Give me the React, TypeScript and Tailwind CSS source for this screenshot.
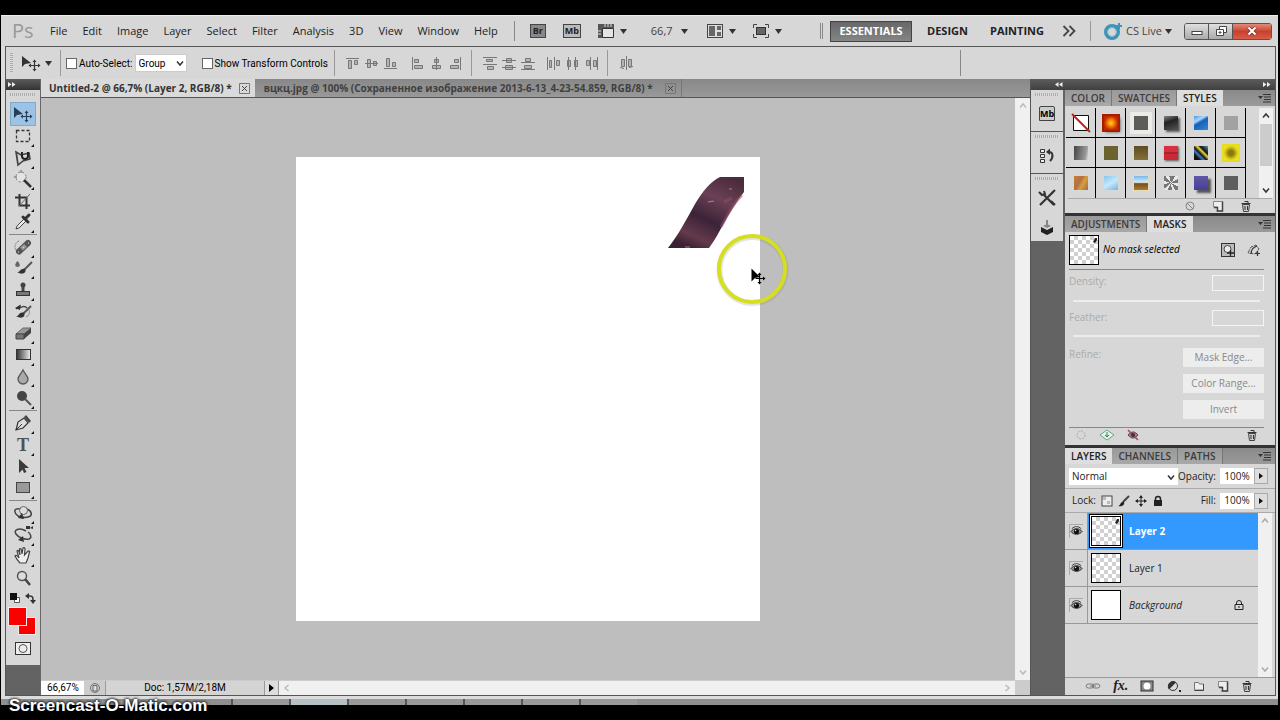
import type { ReactNode } from "react";

const menus = ["File", "Edit", "Image", "Layer", "Select", "Filter", "Analysis", "3D", "View", "Window", "Help"];

const layers = [
    { name: "Layer 2", kind: "active" },
    { name: "Layer 1", kind: "normal" },
    { name: "Background", kind: "locked" },
];

const styleSwatches = [
    "none",
    "bg-[radial-gradient(circle,#ffc020_10%,#f07000_40%,#c02800_70%)] outline-2 outline-[#a81c00] shadow-[2px_2px_3px_#444]",
    "bg-[#5c5c58] outline-4 outline-[#ecece6]",
    "bg-[linear-gradient(160deg,#888,#222_40%,#555)] shadow-[2px_2px_2px_#555]",
    "bg-[linear-gradient(150deg,#5098d8,#a8d8ff_30%,#1860b8_45%,#3088d8)]",
    "bg-[#a2a2a2]",
    "bg-[linear-gradient(100deg,#444,#999_80%,#ddd)]",
    "bg-[#6b6230]",
    "bg-[linear-gradient(#5c4c20,#86703a)]",
    "bg-[linear-gradient(#d83040_40%,#8a2028_50%,#cc2838_60%)] shadow-[1px_1px_2px_#555]",
    "bg-[linear-gradient(45deg,#111_20%,#4080c0_35%,#111_45%,#e8d840_60%,#111_70%,#50a0a0)]",
    "bg-[radial-gradient(circle,#887a10_25%,#b8a810_45%,#f0e020_75%)] outline-2 outline-[#e8dc20]",
    "bg-[linear-gradient(120deg,#c88030,#b07048_40%,#d8a030_60%,#a06860)]",
    "bg-[linear-gradient(150deg,#88c4ec,#c4e8fc_50%,#78b4e0)]",
    "bg-[linear-gradient(#78b8e8,#d8ecf8_45%,#785018_55%,#a87c30)] outline-1 outline-[#e4ddb8]",
    "bg-[repeating-conic-gradient(#777_0_9%,#e8e8e8_0_16%)]",
    "bg-[linear-gradient(#6058a0,#48409a)] shadow-[3px_3px_2px_#555]",
    "bg-[#5e5e5e]",
];

function Svg({ w = 16, h = 16, children, className = "" }: { w?: number; h?: number; children: ReactNode; className?: string }) {
    return (
        <svg width={w} height={h} viewBox={`0 0 ${w} ${h}`} className={`shrink-0 ${className}`} fill="none" aria-hidden="true">
            {children}
        </svg>
    );
}

function Down({ className = "" }: { className?: string }) {
    return (
        <Svg w={7} h={5} className={className}>
            <path d="M0 0h7L3.500 5z" fill="#333" />
        </Svg>
    );
}

function Chevron({ color = "#333", dir = "down" }: { color?: string; dir?: "down" | "up" | "left" | "right" }) {
    const d = { down: "M1 2.500L4 6l3-3.500", up: "M1 5.500L4 2l3 3.500", left: "M5.500 1L2 4l3.500 3", right: "M2.500 1L6 4 2.500 7" };
    return (
        <Svg w={8} h={8}>
            <path d={d[dir]} stroke={color} strokeWidth="1.500" />
        </Svg>
    );
}

function MoveIcon({ fill = "#333" }: { fill?: string }) {
    return (
        <>
            <path d="M3 3v11l3-3 6-1z" fill={fill} />
            <path d="M15.500 8v9M11 12.500h9" stroke={fill} strokeWidth="1.200" />
            <path d="M15.500 6.500l2 2.500h-4zM15.500 18.500l2-2.500h-4zM9.500 12.500l2.500-2v4zM21.500 12.500l-2.500-2v4z" fill={fill} />
        </>
    );
}

function Trash() {
    return (
        <Svg w={12} h={12}>
            <path d="M2.500 4.500h7l-1 7h-5z" fill="#ccc" stroke="#444" />
            <path d="M1.500 3.500h9M4.500 1.500h3.500v2M5 6v4M7.500 6v4" stroke="#333" />
        </Svg>
    );
}

function NewPage() {
    return (
        <Svg w={12} h={12}>
            <path d="M1.500 1.500h9v9.500h-5v-4h-4z" fill="#eee" stroke="#888" />
            <path d="M10.500 1.500v9.500h-6M2 7.500h3.500v3.500" stroke="#444" strokeWidth="1.500" />
        </Svg>
    );
}

const tools: { name: string; icon: ReactNode }[][] = [
    [
        { name: "Move", icon: <MoveIcon fill="#2b3d55" /> },
        { name: "Marquee", icon: <rect x="5.500" y="4.500" width="13" height="11" stroke="#333" strokeWidth="1.300" strokeDasharray="3 2" /> },
        {
            name: "Lasso",
            icon: (
                <>
                    <path d="M5 4l5 3 8-2 1 6-7 2-5 4zM7 17l-1-8-1-5" stroke="#444" strokeWidth="1.600" />
                    <path d="M11 4v4a3 3 0 006 0V4" stroke="#222" strokeWidth="2" />
                </>
            ),
        },
        {
            name: "Quick Selection",
            icon: (
                <>
                    <circle cx="10" cy="8" r="5" fill="#e4e4e4" stroke="#777" strokeDasharray="2 2" />
                    <path d="M13 11l7 7" stroke="#333" strokeWidth="2.500" />
                    <path d="M3 8h3M10 1v3" stroke="#666" />
                </>
            ),
        },
        {
            name: "Crop",
            icon: (
                <>
                    <path d="M8.500 3v11.500H19M4 6.500h11.500V18" stroke="#333" strokeWidth="2" />
                    <path d="M8 15L19 3" stroke="#666" />
                </>
            ),
        },
        {
            name: "Eyedropper",
            icon: (
                <>
                    <path d="M5 17l1-3 7-7 2 2-7 7z" fill="#eee" stroke="#444" />
                    <path d="M12 5l5 5M14 7l4-4" stroke="#333" strokeWidth="3" strokeLinecap="round" />
                </>
            ),
        },
    ],
    [
        {
            name: "Healing Brush",
            icon: (
                <>
                    <path d="M8 4a6 6 0 00-3 9" stroke="#777" strokeDasharray="2 1" />
                    <path d="M8 14.500L17 6" stroke="#555" strokeWidth="6" strokeLinecap="round" />
                    <path d="M10.500 12L14.500 8.500" stroke="#999" strokeWidth="4" />
                    <path d="M12 10.500h1M7 15h1M17 6h1" stroke="#ddd" />
                </>
            ),
        },
        {
            name: "Brush",
            icon: (
                <>
                    <path d="M6.500 3c3 3 3 6 0 6s-3-3 0-6z" fill="#666" />
                    <path d="M13 12l8-8" stroke="#555" strokeWidth="2" />
                    <path d="M6 14c3 1 3-4 8-3 2 3-2 7-8 3z" fill="#333" />
                </>
            ),
        },
        {
            name: "Clone Stamp",
            icon: (
                <>
                    <circle cx="12" cy="5" r="2.500" fill="#444" />
                    <path d="M12 5v7" stroke="#444" strokeWidth="3" />
                    <rect x="5.500" y="11.500" width="13" height="4" fill="#777" stroke="#333" />
                </>
            ),
        },
        {
            name: "History Brush",
            icon: (
                <>
                    <path d="M5 7l4-3v2c3-2 5-2 7 0" stroke="#444" strokeWidth="1.500" />
                    <path d="M12 12l8-8" stroke="#555" strokeWidth="2" />
                    <path d="M5 14c3 1 3-5 8-3 2 3-2 7-8 3zM4 6l5-3v5z" fill="#333" />
                    <path d="M18 8c1 3 0 6-3 7" stroke="#888" />
                </>
            ),
        },
        {
            name: "Eraser",
            icon: (
                <>
                    <path d="M5 11l7-6h8l-7 6z" fill="#999" stroke="#666" />
                    <path d="M13 16l7-6V5l-7 6z" fill="#444" />
                    <path d="M5 11h8v5H5z" fill="#777" stroke="#444" />
                </>
            ),
        },
        {
            name: "Gradient",
            icon: (
                <>
                    <defs>
                        <linearGradient id="tool-gradient">
                            <stop stopColor="#333" />
                            <stop offset="1" stopColor="#eee" />
                        </linearGradient>
                    </defs>
                    <rect x="5.500" y="4.500" width="14" height="10" fill="url(#tool-gradient)" stroke="#333" />
                </>
            ),
        },
        { name: "Blur", icon: <path d="M12 3c2 4 5 6 5 9a5 5 0 01-10 0c0-3 3-5 5-9z" fill="#aaa" stroke="#555" strokeWidth="1.300" /> },
        {
            name: "Dodge",
            icon: (
                <>
                    <circle cx="11" cy="8" r="5" fill="#444" />
                    <path d="M14 11l6 6" stroke="#555" strokeWidth="2" />
                </>
            ),
        },
    ],
    [
        {
            name: "Pen",
            icon: (
                <>
                    <path d="M5 17l2-8 6-4 4 5-5 5z" fill="#ddd" stroke="#333" strokeWidth="1.200" />
                    <path d="M5 17l6-6" stroke="#333" />
                    <path d="M13 4l2-2 5 6-2 2z" fill="#444" />
                </>
            ),
        },
        { name: "Type", icon: <text x="12" y="16" textAnchor="middle" fontSize="18" fontFamily="Liberation Serif, serif" fontWeight="bold" fill="#505050">T</text> },
        { name: "Path Selection", icon: <path d="M8 3v14l3.500-3.500L13 17l2.500-1-2-4H18z" fill="#3a3a3a" /> },
        { name: "Rectangle", icon: <rect x="5.500" y="4.500" width="13" height="10" fill="#999" stroke="#444" /> },
    ],
    [
        {
            name: "3D Rotate",
            icon: (
                <>
                    <path d="M9 6C3 5 2 9 7 13l5 2M16 6c5 2 6 7 1 8-3 1-6 0-8-1" stroke="#444" strokeWidth="1.500" />
                    <circle cx="12.500" cy="7.500" r="4" fill="#ddd" stroke="#666" />
                    <path d="M7 15l4-5 2 6z" fill="#333" />
                </>
            ),
        },
        {
            name: "3D Camera",
            icon: (
                <>
                    <path d="M15 6C8 2 2 5 5 9c2 3 8 6 13 5 3-1 2-5-1-7" stroke="#444" strokeWidth="1.500" />
                    <path d="M7 15l5-4 1 6zM15 1h4v3h-4zM19 3l3-2v3z" fill="#333" />
                </>
            ),
        },
        {
            name: "Hand",
            icon: (
                <path
                    d="M9 17c-2-2-4-5-5-7 1-1 2-1 4 2L6 5c1-1 2-1 3 4l-.500-6c1-1 2-1 2.500 5l1-6c1-1 2 0 2 1l-.500 6L17 5c1 0 2 0 1.500 1L17 12l-2 5z"
                    fill="#eee"
                    stroke="#444"
                    strokeWidth="1.200"
                />
            ),
        },
        {
            name: "Zoom",
            icon: (
                <>
                    <circle cx="11" cy="8" r="4.500" fill="#ddd" stroke="#555" strokeWidth="1.500" />
                    <path d="M14 11l5 6" stroke="#444" strokeWidth="2.500" />
                </>
            ),
        },
    ],
];

const alignEdges: ReactNode[][] = [
    [
        <path d="M2 3.500h13M4.500 5.500h3v8h-3zM10.500 5.500h3v4h-3z" />,
        <path d="M2 8.500h13M4.500 4.500h3v8h-3zM10.500 6.500h3v4h-3z" />,
        <path d="M2 13.500h13M4.500 3.500h3v8h-3zM10.500 7.500h3v4h-3z" />,
    ],
    [
        <path d="M3.500 2v13M5.500 4.500h4v3h-4zM5.500 10.500h8v3h-8z" />,
        <path d="M8.500 2v13M6.500 4.500h4v3h-4zM4.500 10.500h8v3h-8z" />,
        <path d="M13.500 2v13M7.500 4.500h4v3h-4zM3.500 10.500h8v3h-8z" />,
    ],
    [
        <path d="M1 2.500h14M1 9.500h14M4.500 4.500h6v2h-6zM5.500 11.500h6v3h-6z" />,
        <path d="M1 5.500h14M1 12.500h14M5.500 3.500h5v4h-5zM4.500 10.500h7v4h-7z" />,
        <path d="M1 7.500h14M1 14.500h14M5.500 3.500h5v3h-5zM4.500 10.500h7v3h-7z" />,
    ],
    [
        <path d="M2.500 2v13M9.500 2v13M4.500 5.500h2v7h-2zM11.500 5.500h3v5h-3z" />,
        <path d="M4.500 2v13M11.500 2v13M3.500 5.500h3v6h-3zM10.500 5.500h3v6h-3z" />,
        <path d="M7.500 2v13M14.500 2v13M3.500 5.500h3v5h-3zM10.500 5.500h3v6h-3z" />,
    ],
    [<path d="M8.500 1v14M3.500 4.500h3v7h-3zM10.500 4.500h3v7h-3zM2 12.500l4 1M11 12.500l4-1" />],
];

function AlignGroup({ icons }: { icons: ReactNode[] }) {
    return (
        <div className="flex gap-[3px]">
            {icons.map((icon, i) => (
                <button key={i} aria-label="Align">
                    <Svg>
                        <g stroke="#777" fill="#b4b4b4">{icon}</g>
                    </Svg>
                </button>
            ))}
        </div>
    );
}

function PanelTabs({ tabs, active }: { tabs: string[]; active: string }) {
    return (
        <div className="flex h-4 shrink-0 bg-linear-to-b from-[#8a8a8a] to-[#9a9a9a] text-[10px] leading-4 font-semibold">
            {tabs.map((tab) => (
                <button
                    key={tab}
                    className={
                        tab === active
                            ? "bg-[#dedede] px-[6px] text-[#222]"
                            : "border-r border-[#777] bg-linear-to-b from-[#999] to-[#a8a8a8] px-[6px] text-[#3c3c3c]"
                    }
                >
                    {tab}
                </button>
            ))}
            <button className="mr-1 ml-auto" aria-label="Panel menu">
                <Svg w={13} h={10}>
                    <path d="M0 3h5L2.500 6zM5 1h8v1H5zM6 3.500h7v1H6zM6 6h7v1H6zM5 8.500h8v1H5z" fill="#333" />
                </Svg>
            </button>
        </div>
    );
}

function Thumb({ mark = false, plain = false }: { mark?: boolean; plain?: boolean }) {
    return (
        <div
            className={
                plain
                    ? "h-[30px] w-[30px] shrink-0 border border-black bg-white"
                    : "h-[30px] w-[30px] shrink-0 border border-black bg-[conic-gradient(#d0d0d0_25%,#fff_0_50%,#d0d0d0_0_75%,#fff_0)] bg-[length:8px_8px]"
            }
        >
            {mark && (
                <Svg w={28} h={28}>
                    <path d="M23 6l2-4h2v2l-2 3z" fill="#222" />
                </Svg>
            )}
        </div>
    );
}

function Eye() {
    return (
        <Svg w={14} h={14} className="border-t border-l border-[#aaa]">
            <path d="M1 7c3-4 9-4 12 0-3 4-9 4-12 0z" fill="#999" stroke="#222" />
            <circle cx="7" cy="7" r="2.800" fill="#111" />
            <path d="M2 4c3-3 7-3 10 0" stroke="#333" />
            <circle cx="6" cy="6" r="0.800" fill="#ddd" />
        </Svg>
    );
}

function MenuBar() {
    return (
        <header className="flex h-[31px] shrink-0 items-center border-t border-[#eee] bg-[#d7d7d7] pr-[6px] pl-[11px] text-[#222]">
            <span className="w-[38px] text-[20px] leading-5 text-[#999]">Ps</span>
            <nav className="flex gap-[15px] text-[11px]">
                {menus.map((m) => (
                    <button key={m}>{m}</button>
                ))}
            </nav>
            <div className="ml-4 h-5 w-px bg-[#888]" />
            <button className="ml-[15px] h-[14px] w-4 border border-[#444] bg-[#888] text-[9px] leading-3 font-bold">Br</button>
            <button className="ml-[17px] h-[14px] w-[18px] border border-[#444] bg-[#bbb] text-[9px] leading-3 font-bold">Mb</button>
            <button className="ml-4 flex items-center gap-[5px]" aria-label="View extras">
                <Svg w={18}>
                    <path d="M1 1h16v4H6v10H1z" fill="#555" />
                    <path d="M5.500 5.500h11v9h-11z" fill="#e4e4e4" stroke="#333" />
                    <path d="M8 1v3M11 1v3M14 1v3M1 8h3M1 11h3" stroke="#ddd" />
                </Svg>
                <Down />
            </button>
            <button className="ml-6 flex items-center gap-2 text-[11px] text-[#444]">
                66,7
                <Down />
            </button>
            <button className="ml-[18px] flex items-center gap-[5px]" aria-label="Arrange documents">
                <Svg w={18}>
                    <rect x="1.500" y="1.500" width="15" height="13" fill="#ddd" stroke="#444" />
                    <path d="M3 3h6v10H3zM11 3h4v4h-4zM11 9h4v4h-4z" fill="#666" />
                </Svg>
                <Down />
            </button>
            <button className="ml-4 flex items-center gap-[5px]" aria-label="Screen mode">
                <Svg w={18}>
                    <path d="M1.500 5V1.500H5M13 1.500h3.500V5M1.500 11v3.500H5M13 14.500h3.500V11" stroke="#444" />
                    <rect x="4.500" y="4.500" width="9" height="7" fill="#666" stroke="#333" />
                </Svg>
                <Down />
            </button>
            <div className="ml-auto h-4 w-[3px] border-x border-[#888]" />
            <button className="ml-[7px] h-[21px] w-[82px] border border-[#444] bg-linear-to-b from-[#686868] to-[#858585] text-[11px] font-bold text-white">
                ESSENTIALS
            </button>
            <button className="ml-[15px] text-[11px] font-bold">DESIGN</button>
            <button className="ml-[22px] text-[11px] font-bold">PAINTING</button>
            <button className="ml-[18px]" aria-label="More workspaces">
                <Svg w={14} h={12}>
                    <path d="M1.500 1l5 5-5 5M7.500 1l5 5-5 5" stroke="#444" strokeWidth="1.800" />
                </Svg>
            </button>
            <div className="ml-[14px] h-5 w-px bg-[#999]" />
            <button className="ml-3 flex items-center gap-[3px] text-[11px] text-[#444]">
                <Svg w={20} h={18}>
                    <circle cx="9" cy="10" r="6" stroke="#3f93b4" strokeWidth="4" />
                    <circle cx="9" cy="10" r="4.500" stroke="#86c2d8" />
                    <path d="M16 1v6M13 4h6" stroke="#3f93b4" strokeWidth="2" />
                </Svg>
                CS Live
                <Down />
            </button>
            <div className="ml-3 flex h-[17px] overflow-hidden rounded-[3px] border border-[#555]">
                <button className="flex w-6 items-center justify-center border-r border-[#555] bg-linear-to-b from-[#e0e0e0] to-[#aaa]" aria-label="Minimize">
                    <Svg w={12} h={12}>
                        <rect x="1" y="6.500" width="10" height="3" fill="#fff" stroke="#444" />
                    </Svg>
                </button>
                <button className="flex w-6 items-center justify-center border-r border-[#555] bg-linear-to-b from-[#e0e0e0] to-[#aaa]" aria-label="Restore">
                    <Svg w={12} h={12}>
                        <path d="M4.500 1.500h7v6h-7z" fill="#fff" stroke="#444" />
                        <path d="M1.500 4.500h7v6h-7z" fill="#fff" stroke="#444" />
                        <path d="M4 7h2v1H4z" stroke="#444" />
                    </Svg>
                </button>
                <button className="flex w-[38px] items-center justify-center bg-linear-to-b from-[#e08a78] via-[#c8402c] to-[#d85c48]" aria-label="Close">
                    <Svg w={10} h={10}>
                        <path d="M1.500 1.500l7 7M8.500 1.500l-7 7" stroke="#722" strokeWidth="3.500" />
                        <path d="M1.500 1.500l7 7M8.500 1.500l-7 7" stroke="#fff" strokeWidth="2.200" />
                    </Svg>
                </button>
            </div>
        </header>
    );
}

function OptionsBar() {
    return (
        <div className="flex h-8 shrink-0 items-center bg-[#d7d7d7] pl-1 font-[Roboto,sans-serif] text-[10px] text-black">
            <div className="h-5 w-[3px] bg-[repeating-linear-gradient(#aaa_0_1px,#ddd_1px_2px)]" />
            <button className="ml-[6px] flex items-center gap-1" aria-label="Move tool presets">
                <Svg w={22} h={20}>
                    <MoveIcon />
                </Svg>
                <Down />
            </button>
            <div className="ml-2 h-[26px] w-px bg-[#999]" />
            <input id="auto-select" type="checkbox" className="ml-[5px] h-[11px] w-[11px] appearance-none border border-[#666] bg-white" />
            <label htmlFor="auto-select" className="ml-[2px]">Auto-Select:</label>
            <div className="relative ml-[2px] flex">
                <select aria-label="Auto-select target" className="h-[18px] w-[52px] appearance-none border border-[#ccc] bg-white pl-[3px] text-[10px]">
                    <option>Group</option>
                </select>
                <span className="pointer-events-none absolute top-[5px] right-[3px]">
                    <Chevron />
                </span>
            </div>
            <input id="transform" type="checkbox" className="ml-[15px] h-[11px] w-[11px] appearance-none border border-[#666] bg-white" />
            <label htmlFor="transform" className="ml-[2px]">Show Transform Controls</label>
            <div className="mr-[9px] ml-[6px] h-[26px] w-px bg-[#999]" />
            <AlignGroup icons={alignEdges[0]} />
            <div className="w-[11px]" />
            <AlignGroup icons={alignEdges[1]} />
            <div className="mr-[10px] ml-2 h-[26px] w-px bg-[#999]" />
            <AlignGroup icons={alignEdges[2]} />
            <div className="w-[9px]" />
            <AlignGroup icons={alignEdges[3]} />
            <div className="mr-[10px] ml-2 h-[26px] w-px bg-[#999]" />
            <AlignGroup icons={alignEdges[4]} />
            <div className="mr-[314px] ml-auto h-[26px] w-px bg-[#888]" />
        </div>
    );
}

function Toolbox() {
    return (
        <aside className="flex w-[35px] shrink-0 flex-col border-r border-[#666] bg-[#636363]">
            <div className="flex h-[11px] items-center bg-linear-to-b from-[#5c5c5c] to-[#333] pl-[2px]">
                <Svg w={8} h={5}>
                    <path d="M0 0l3.500 2.500L0 5zM4 0l3.500 2.500L4 5z" fill="#eee" />
                </Svg>
            </div>
            <div className="flex flex-col bg-[#d7d7d7] pb-2">
                <div className="mx-1 mt-[3px] mb-[6px] h-[3px] bg-[repeating-linear-gradient(90deg,#aaa_0_1px,#ddd_1px_2px)]" />
                {tools.map((group, g) => (
                    <div key={g}>
                        {g > 0 && <div className="mx-[3px] my-px h-px bg-[#888]" />}
                        <div className={g === 0 ? "flex h-[131px] flex-col" : g === 1 ? "flex h-[173px] flex-col" : "flex h-[87px] flex-col"}>
                            {group.map((tool) => (
                                <button
                                    key={tool.name}
                                    aria-label={tool.name}
                                    className={
                                        tool.name === "Move"
                                            ? "relative mx-1 flex flex-1 items-center justify-center border border-[#80a8c8] bg-[#9cc3e6]"
                                            : "relative mx-1 flex flex-1 items-center justify-center"
                                    }
                                >
                                    <Svg w={24} h={20}>{tool.icon}</Svg>
                                    {tool.name !== "Move" && tool.name !== "Zoom" && (
                                        <span className="absolute right-[2px] bottom-0">
                                            <Svg w={3} h={3}>
                                                <path d="M3 0v3H0z" fill="#111" />
                                            </Svg>
                                        </span>
                                    )}
                                </button>
                            ))}
                        </div>
                    </div>
                ))}
                <div className="mx-1 mt-[2px] flex h-[14px] items-center justify-between">
                    <Svg w={10} h={10}>
                        <path d="M4.500 4.500h5v5h-5z" fill="#fff" stroke="#555" />
                        <path d="M0 0h7v7H0z" fill="#111" />
                    </Svg>
                    <Svg w={11} h={11}>
                        <path d="M2 3h3c3 0 3 2 3 5" stroke="#333" strokeWidth="1.500" />
                        <path d="M0 3l4-3v6zM8 11L5 7h6z" fill="#333" />
                    </Svg>
                </div>
                <button className="mt-[2px] ml-[2px] h-7 w-7 text-left" aria-label="Foreground and background color">
                    <Svg w={28} h={28}>
                        <rect x="10.500" y="10.500" width="17" height="17" fill="#fc0000" stroke="#eee" />
                        <rect x="0.500" y="0.500" width="18" height="18" fill="#fc0000" stroke="#eee" />
                    </Svg>
                </button>
                <button className="mt-[7px] mb-[2px] flex justify-center" aria-label="Quick mask">
                    <Svg w={16} h={13}>
                        <rect x="0.500" y="0.500" width="15" height="12" fill="#eee" stroke="#333" />
                        <circle cx="8" cy="6.500" r="4" stroke="#555" />
                    </Svg>
                </button>
            </div>
        </aside>
    );
}

function CloseBox() {
    return (
        <Svg w={11} h={11}>
            <path d="M.5.5h10v10H.5z" stroke="#777" />
            <path d="M3 3l5 5M8 3l-5 5" stroke="#444" />
        </Svg>
    );
}

function DocumentArea() {
    return (
        <main className="flex min-w-0 flex-1 flex-col border-r border-[#555]">
            <div className="flex h-[19px] shrink-0 border-b border-[#555] bg-linear-to-b from-[#888] to-[#999] text-[10px] leading-[18px] font-bold">
                <button className="flex items-center gap-[7px] bg-[#dadada] pr-[5px] pl-2 text-[#333]">
                    Untitled-2 @ 66,7% (Layer 2, RGB/8) *
                    <CloseBox />
                </button>
                <button className="flex items-center gap-3 border-r border-[#777] pr-[5px] pl-[9px] text-[#404040]">
                    вцкц.jpg @ 100% (Сохраненное изображение 2013-6-13_4-23-54.859, RGB/8) *
                    <CloseBox />
                </button>
            </div>
            <div className="flex flex-1">
                <div className="flex flex-1 items-center justify-center bg-[#bebebe]">
                    <div className="relative h-[464px] w-[464px] bg-white">
                        <svg width="464" height="464" viewBox="0 0 464 464" className="absolute inset-0 overflow-visible" aria-hidden="true">
                            <defs>
                                <linearGradient id="stroke-fill" x1="0.800" y1="0" x2="0.300" y2="1">
                                    <stop stopColor="#4a2c3c" />
                                    <stop offset="0.300" stopColor="#6a4054" />
                                    <stop offset="0.600" stopColor="#3c2338" />
                                    <stop offset="0.850" stopColor="#643a4c" />
                                    <stop offset="1" stopColor="#3a2233" />
                                </linearGradient>
                            </defs>
                            <path d="M424 20h24v15c-8 10-14 20-20 31-5 9-9 17-15 25h-41c11-14 18-28 27-44 8-13 15-22 25-27z" fill="url(#stroke-fill)" />
                            <path d="M446 38c-9 9-15 20-21 32M428 45l8-4" stroke="#925060" strokeWidth="3" opacity="0.500" fill="none" />
                            <path d="M412 45l6-1M433 32h3M389 90h5" stroke="#c8a8b8" strokeWidth="1" opacity="0.700" />
                            <circle cx="456.500" cy="113" r="33" fill="none" stroke="#777" strokeWidth="6" opacity="0.200" />
                            <circle cx="456" cy="112" r="33" fill="none" stroke="#d5df20" strokeWidth="4" />
                            <path d="M455.500 111.500v13l3.500-3.500 5-1z" fill="#000" />
                            <path d="M463.500 117.500v8M459.500 121.500h8" stroke="#000" strokeWidth="1.200" />
                            <path d="M463.500 115.500l2 2.500h-4zM463.500 127.500l2-2.500h-4zM469.500 121.500l-2.500-2v4z" fill="#000" />
                        </svg>
                    </div>
                </div>
                <div className="flex w-[15px] flex-col items-center justify-between bg-[#f0f0f0] py-1">
                    <Chevron dir="up" color="#bbb" />
                    <Chevron color="#bbb" />
                </div>
            </div>
            <div className="flex h-[15px] shrink-0 border-t border-[#ccc] font-[Roboto,sans-serif] text-[10px] leading-[14px]">
                <input aria-label="Zoom level" defaultValue="66,67%" className="w-[43px] bg-white pl-[6px]" />
                <button className="flex w-[22px] items-center justify-center border-r border-[#999] bg-[#ccc]" aria-label="Share">
                    <Svg w={12} h={12}>
                        <circle cx="6" cy="6" r="4.500" stroke="#777" />
                        <path d="M4 3.500h4V9H4z" fill="#ddd" stroke="#666" />
                    </Svg>
                </button>
                <div className="w-[158px] bg-[#d4d4d4] text-center">Doc: 1,57M/2,18M</div>
                <button className="flex w-[15px] items-center justify-center border-x border-[#999] bg-[#ddd]" aria-label="Status menu">
                    <Svg w={5} h={8}>
                        <path d="M0 0v8l5-4z" fill="#000" />
                    </Svg>
                </button>
                <div className="flex flex-1 items-center justify-between bg-[#f0f0f0] px-1">
                    <Chevron dir="left" color="#bbb" />
                    <Chevron dir="right" color="#bbb" />
                </div>
                <div className="w-[15px] bg-[#ccc]" />
            </div>
        </main>
    );
}

function DockStrip() {
    const grip = <div className="mx-1 mt-[3px] h-[3px] bg-[repeating-linear-gradient(90deg,#aaa_0_1px,#ddd_1px_2px)]" />;
    return (
        <div className="flex w-[34px] shrink-0 flex-col bg-[#636363] pr-[2px]">
            <div className="border-b border-[#555] bg-[#d7d7d7]">
                {grip}
                <button className="mx-auto flex h-[35px] items-center" aria-label="Mini Bridge">
                    <span className="h-[15px] w-4 rounded-t-xs border border-[#444] bg-[#ccc] text-[9px] leading-[13px] font-bold">Mb</span>
                </button>
            </div>
            <div className="border-b border-[#555] bg-[#d7d7d7]">
                {grip}
                <button className="mx-auto flex h-[35px] items-center" aria-label="History">
                    <Svg>
                        <path d="M1.500 1.500h4v3h-4zM1.500 6.500h4v3h-4zM1.500 11.500h4v3h-4z" fill="#eee" stroke="#333" />
                        <path d="M9 4c5-1 6 5 2 9" stroke="#333" strokeWidth="2" />
                        <path d="M7 4l4-3.500V7z" fill="#333" />
                    </Svg>
                </button>
            </div>
            <div className="bg-[#d7d7d7]">
                {grip}
                <button className="mx-auto flex h-[35px] items-center" aria-label="Tool presets">
                    <Svg w={18} h={18}>
                        <path d="M2 16L15 3M16 16L6 6" stroke="#333" strokeWidth="2.200" />
                        <path d="M1 3l3 3 3-1-1-3M13 12l4 4M14 4l3-3" stroke="#333" strokeWidth="2" />
                    </Svg>
                </button>
                <button className="mx-auto flex h-[26px] items-center" aria-label="3D">
                    <Svg w={14}>
                        <path d="M7 0v6" stroke="#333" />
                        <path d="M1 7l6 3 6-3v5l-6 3-6-3z" fill="#222" />
                        <path d="M3 6l4-2 4 2-4 2z" fill="#888" />
                    </Svg>
                </button>
            </div>
        </div>
    );
}

function StylesPanel() {
    return (
        <section className="flex flex-col border-b-[3px] border-[#333] bg-[#d7d7d7]">
            <PanelTabs tabs={["COLOR", "SWATCHES", "STYLES"]} active="STYLES" />
            <div className="mt-[2px] flex justify-between">
                <div className="grid h-[90px] grid-cols-[repeat(6,30px)] grid-rows-[repeat(3,30px)] pl-px">
                    {styleSwatches.map((swatch, i) => (
                        <button
                            key={i}
                            aria-label={`Style ${i + 1}`}
                            className={i < 12 ? "flex items-center justify-center border-r border-b border-black" : "flex items-center justify-center border-r border-black"}
                        >
                            {swatch === "none" ? (
                                <Svg w={20} h={20}>
                                    <path d="M2.500 2.500h15v15h-15z" fill="#fff" stroke="#111" />
                                    <path d="M1 1l18 18" stroke="#c02020" strokeWidth="2" />
                                </Svg>
                            ) : (
                                <span className={`h-[14px] w-[14px] ${swatch}`} />
                            )}
                        </button>
                    ))}
                </div>
                <div className="mr-[2px] flex w-[14px] flex-col items-center bg-[#f0f0f0] pt-1 pb-1">
                    <Chevron dir="up" />
                    <div className="mt-1 mb-auto h-[42px] w-3 bg-[#ccc]" />
                    <Chevron />
                </div>
            </div>
            <div className="mx-[3px] flex h-[15px] items-center justify-end gap-4 border-t border-[#aaa] pr-5">
                <button aria-label="Clear style">
                    <Svg w={12} h={12}>
                        <circle cx="6" cy="6" r="4" stroke="#888" />
                        <path d="M3 3l6 6" stroke="#888" />
                    </Svg>
                </button>
                <button aria-label="New style"><NewPage /></button>
                <button aria-label="Delete style"><Trash /></button>
            </div>
        </section>
    );
}

function MasksPanel() {
    return (
        <section className="flex flex-col border-b-[3px] border-[#333] bg-[#d7d7d7] text-[10px]">
            <PanelTabs tabs={["ADJUSTMENTS", "MASKS"]} active="MASKS" />
            <div className="flex flex-col pr-[11px] pl-1">
                <div className="flex h-[38px] items-center border-b border-[#888] pb-[2px]">
                    <Thumb mark />
                    <span className="ml-1 text-black italic">No mask selected</span>
                    <button className="mr-3 ml-auto" aria-label="Add pixel mask">
                        <Svg w={14} h={14}>
                            <rect x="0.500" y="0.500" width="13" height="13" fill="#bbb" stroke="#333" />
                            <circle cx="6.500" cy="6" r="3.500" fill="#eee" stroke="#444" />
                            <path d="M6 10h7M9.500 7v6" stroke="#222" strokeWidth="1.300" />
                        </Svg>
                    </button>
                    <button className="mr-[3px]" aria-label="Add vector mask">
                        <Svg w={14} h={14}>
                            <path d="M1 10l3-6 5-2 3 4-4 5z" stroke="#555" strokeDasharray="4 1" />
                            <path d="M4 11c0-5 3-7 6-8M8 10.500h5M10.500 8v5" stroke="#333" strokeWidth="1.200" />
                        </Svg>
                    </button>
                </div>
                <div className="mt-1 flex h-[18px] items-center justify-between text-[#aaa]">
                    <label htmlFor="density" className="pb-1">Density:</label>
                    <input id="density" disabled className="h-4 w-[52px] border border-[#f4f4f4]" />
                </div>
                <div className="mx-1 mt-2 h-[2px] bg-[#ededed]" />
                <div className="mt-[7px] flex h-[18px] items-center justify-between text-[#aaa]">
                    <label htmlFor="feather" className="pb-[2px]">Feather:</label>
                    <input id="feather" disabled className="h-4 w-[52px] border border-[#f4f4f4]" />
                </div>
                <div className="mx-1 mt-2 h-[2px] bg-[#ededed]" />
                <div className="mt-[11px] flex justify-between text-[#aaa]">
                    <span className="leading-3">Refine:</span>
                    <div className="flex w-[81px] flex-col gap-[7px] text-[#888]">
                        {["Mask Edge...", "Color Range...", "Invert"].map((b) => (
                            <button key={b} disabled className="h-[19px] bg-[#ededed]">{b}</button>
                        ))}
                    </div>
                </div>
                <div className="mt-2 flex h-[18px] items-center gap-[13px] border-t border-[#888] pb-1 pl-[6px]">
                    <Svg w={12} h={12}>
                        <circle cx="6" cy="6" r="4" stroke="#aaa" strokeDasharray="2 1" />
                    </Svg>
                    <Svg w={14} h={12}>
                        <path d="M0 6l7-5 7 5-7 5z" fill="#e4f4ea" stroke="#6aa68a" />
                        <path d="M7 3v5M5 6l2 2 2-2" stroke="#3c7a5c" />
                    </Svg>
                    <Svg w={12} h={12}>
                        <path d="M1 6c3-4 7-4 10 0-3 4-7 4-10 0z" fill="#99808a" stroke="#644" />
                        <path d="M1 1l10 10" stroke="#b04060" strokeWidth="1.500" />
                        <circle cx="6" cy="6" r="2" fill="#433" />
                    </Svg>
                    <button className="mr-[6px] ml-auto" aria-label="Delete mask"><Trash /></button>
                </div>
            </div>
        </section>
    );
}

function PercentField({ id }: { id: string }) {
    return (
        <div className="ml-1 flex h-4">
            <input id={id} defaultValue="100%" className="w-[34px] bg-white text-center" />
            <button className="flex w-[14px] items-center justify-center border border-[#aaa] bg-[#ddd]" aria-label={`${id} slider`}>
                <Svg w={4} h={6}>
                    <path d="M0 0v6l4-3z" fill="#111" />
                </Svg>
            </button>
        </div>
    );
}

function LayersPanel() {
    return (
        <section className="flex flex-1 flex-col bg-[#d7d7d7] text-[10px] text-[#222]">
            <PanelTabs tabs={["LAYERS", "CHANNELS", "PATHS"]} active="LAYERS" />
            <div className="flex h-[25px] items-center border-b border-[#aaa] pr-[7px] pl-1">
                <div className="relative flex">
                    <select aria-label="Blend mode" className="h-[17px] w-[109px] appearance-none bg-white pl-[3px]">
                        <option>Normal</option>
                    </select>
                    <span className="pointer-events-none absolute top-[5px] right-[3px]">
                        <Chevron />
                    </span>
                </div>
                <label htmlFor="opacity" className="ml-auto">Opacity:</label>
                <PercentField id="opacity" />
            </div>
            <div className="flex h-6 items-center border-b border-[#aaa] pr-[7px] pl-[7px]">
                <span className="mr-[5px]">Lock:</span>
                <div className="flex gap-[5px]">
                    <Svg w={12} h={12}>
                        <rect x="1" y="1" width="10" height="10" fill="#eee" stroke="#444" />
                        <path d="M2 2h3v3H2zM6 6h3v3H6z" fill="#bbb" />
                    </Svg>
                    <Svg w={12} h={12}>
                        <path d="M5 7l6-6" stroke="#444" strokeWidth="2" />
                        <path d="M0 11c3 0 2-5 6-4 1 3-2 5-6 4z" fill="#222" />
                    </Svg>
                    <Svg w={12} h={12}>
                        <path d="M6 1v10M1 6h10" stroke="#222" />
                        <path d="M6 0l2 3H4zM6 12l2-3H4zM0 6l3-2v4zM12 6L9 4v4z" fill="#222" />
                    </Svg>
                    <Svg w={12} h={12}>
                        <path d="M3.500 6V4a2.500 2.500 0 015 0v2" stroke="#222" strokeWidth="1.500" />
                        <rect x="2" y="5" width="8" height="6" fill="#222" />
                    </Svg>
                </div>
                <label htmlFor="fill" className="ml-auto">Fill:</label>
                <PercentField id="fill" />
            </div>
            <div className="flex flex-1">
                <ul className="flex-1">
                    {layers.map((layer) => (
                        <li key={layer.name} className="flex h-[37px] border-b border-[#999]">
                            <button className="flex w-[23px] items-center justify-center border-r border-[#999]" aria-label={`Toggle ${layer.name}`}>
                                <Eye />
                            </button>
                            <div
                                className={
                                    layer.kind === "active"
                                        ? "flex flex-1 items-center bg-[#3399fe] pl-px font-bold text-white"
                                        : "flex flex-1 items-center pl-px"
                                }
                            >
                                <div className={layer.kind === "active" ? "border border-black bg-white p-px" : "p-[2px]"}>
                                    <Thumb mark={layer.kind === "active"} plain={layer.kind === "locked"} />
                                </div>
                                <span className={layer.kind === "locked" ? "ml-[6px] italic" : "ml-[6px]"}>{layer.name}</span>
                                {layer.kind === "locked" && (
                                    <Svg w={12} h={12} className="mr-[13px] ml-auto">
                                        <path d="M3.500 5V4a2.500 2.500 0 015 0v1M2 5.500h8v5H2zM6 7v2" stroke="#222" />
                                    </Svg>
                                )}
                            </div>
                        </li>
                    ))}
                </ul>
                <div className="mr-[3px] flex w-[14px] flex-col items-center justify-between bg-[#f0f0f0] py-1">
                    <Chevron dir="up" color="#aaa" />
                    <Chevron color="#aaa" />
                </div>
            </div>
            <div className="flex h-[18px] shrink-0 items-center justify-between border-t border-[#999] pr-[22px] pb-[2px] pl-5">
                <Svg w={16} h={12}>
                    <path d="M1 6a2.500 2.500 0 012.500-2h3a2 2 0 010 4h-3A2.500 2.500 0 011 6zM15 6a2.500 2.500 0 00-2.500-2h-3a2 2 0 000 4h3A2.500 2.500 0 0015 6zM5 6h6" stroke="#777" />
                </Svg>
                <button className="font-['Liberation_Serif',serif] text-[14px] leading-3 font-bold italic">fx.</button>
                <Svg w={14} h={12}>
                    <rect x="1" y="1" width="12" height="10" fill="#888" stroke="#333" />
                    <circle cx="7" cy="6" r="3.500" fill="#fff" />
                </Svg>
                <Svg w={14} h={12}>
                    <circle cx="6" cy="6" r="4.500" fill="#ddd" stroke="#333" />
                    <path d="M9 2.500a5 5 0 00-7 7z" fill="#333" />
                    <path d="M12 10h2v2h-2z" fill="#222" />
                </Svg>
                <Svg w={12} h={12}>
                    <path d="M1.500 2.500h4l1 1.500h4v6h-9z" fill="#eee" stroke="#777" />
                    <path d="M10.500 4v6.500h-9" stroke="#444" />
                </Svg>
                <button aria-label="New layer"><NewPage /></button>
                <button aria-label="Delete layer"><Trash /></button>
            </div>
        </section>
    );
}

export default function App() {
    return (
        <div className="relative flex min-h-screen flex-col bg-black pt-[15px] pb-[15px] font-['Open_Sans',sans-serif]">
            <div className="mr-[2px] ml-px flex flex-1 flex-col bg-[#dcdcdc]">
                <MenuBar />
                <div className="mr-[2px] ml-1 flex flex-1 flex-col border border-[#555]">
                    <OptionsBar />
                    <div className="flex flex-1">
                        <Toolbox />
                        <DocumentArea />
                        <div className="flex w-[244px] shrink-0 flex-col">
                            <div className="flex h-[11px] shrink-0 items-center justify-between bg-linear-to-b from-[#5c5c5c] to-[#404040] pr-1 pl-6">
                                <Svg w={8} h={5}>
                                    <path d="M3.500 0L0 2.500 3.500 5zM7.500 0L4 2.500 7.500 5z" fill="#eee" />
                                </Svg>
                                <Svg w={8} h={5}>
                                    <path d="M0 0l3.500 2.500L0 5zM4 0l3.500 2.500L4 5z" fill="#eee" />
                                </Svg>
                            </div>
                            <div className="flex flex-1">
                                <DockStrip />
                                <div className="flex flex-1 flex-col">
                                    <StylesPanel />
                                    <MasksPanel />
                                    <LayersPanel />
                                </div>
                            </div>
                        </div>
                    </div>
                </div>
                <div className="mt-[3px] flex h-[6px] bg-[#8f8f8f] pl-[230px]">
                    {[0, 1, 2, 3, 4, 5, 6].map((i) => (
                        <div key={i} className={i === 1 ? "w-[58px] border-l-2 border-[#555] bg-[#b4c0c4]" : "w-[58px] border-l-2 border-[#555] bg-[#999]"} />
                    ))}
                </div>
            </div>
            <div className="absolute bottom-[4px] left-[9px] font-['Liberation_Sans',sans-serif] text-[17px] leading-5 font-bold text-white [text-shadow:0_0_3px_#000,0_0_3px_#000]">
                Screencast-O-Matic.com
            </div>
        </div>
    );
}
